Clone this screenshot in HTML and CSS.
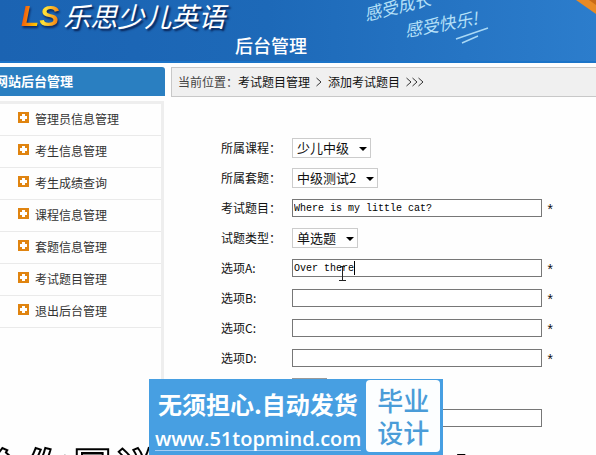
FILE: index.html
```html
<!DOCTYPE html>
<html lang="zh-CN">
<head>
  <meta charset="UTF-8">
  <meta name="viewport" content="width=device-width, initial-scale=1.0">
  <title>后台管理</title>
  <link rel="stylesheet" href="styles.css">
</head>
<body>
  <header class="header">
    <div class="brand"><span class="logo">LS</span><span class="brand-name">乐思少儿英语</span></div>
    <h1>后台管理</h1>
    <svg class="slogan" width="236" height="62" viewBox="0 0 236 62">
      <g class="slogan-text">
        <text x="6" y="21" transform="rotate(-14 6 21)">感受成长</text>
        <text x="46" y="37" transform="rotate(-10 46 37)">感受快乐!</text>
      </g>
      <path d="M96 39 L128 28 M102 43 L118 36" fill="none" stroke="#a9d8f5" stroke-width="1.4"/>
      <path d="M216 0 L236 14 V0 Z" fill="#e98a24"/>
      <path d="M229 0 L236 5 V0 Z" fill="#c96a17"/>
    </svg>
  </header>

  <div class="layout">
    <aside class="sidebar">
      <h2>网站后台管理</h2>
      <nav class="menu">
        <a href="#"><i class="plus"></i>管理员信息管理</a>
        <a href="#"><i class="plus"></i>考生信息管理</a>
        <a href="#"><i class="plus"></i>考生成绩查询</a>
        <a href="#"><i class="plus"></i>课程信息管理</a>
        <a href="#"><i class="plus"></i>套题信息管理</a>
        <a href="#"><i class="plus"></i>考试题目管理</a>
        <a href="#"><i class="plus"></i>退出后台管理</a>
      </nav>
    </aside>

    <main class="main">
      <div class="crumbs">
        <span class="muted">当前位置：</span><span>考试题目管理</span>
        <svg class="arrow" width="6" height="10" viewBox="0 0 6 10"><path d="M0.5 1 L5 5 L0.5 9"/></svg>
        <span>添加考试题目</span>
        <svg class="arrow" width="18" height="10" viewBox="0 0 18 10"><path d="M0.5 1 L5 5 L0.5 9 M6.5 1 L11 5 L6.5 9 M12.5 1 L17 5 L12.5 9"/></svg>
      </div>

      <form class="form">
        <div class="row">
          <label for="course">所属课程：</label>
          <span class="select"><select id="course"><option>少儿中级</option></select></span>
        </div>
        <div class="row">
          <label for="paper">所属套题：</label>
          <span class="select"><select id="paper"><option>中级测试2</option></select></span>
        </div>
        <div class="row">
          <label for="title">考试题目：</label>
          <span class="field"><input type="text" id="title" value="Where is my little cat?"></span>
          <span class="star">*</span>
        </div>
        <div class="row">
          <label for="type">试题类型：</label>
          <span class="select"><select id="type"><option>单选题</option></select></span>
        </div>
        <div class="row">
          <label for="optA">选项A:</label>
          <span class="field">
            <input type="text" id="optA" value="Over there">
            <svg class="pointer" width="18" height="22" viewBox="0 0 18 22">
              <path d="M14.5 2 V16" stroke="#000"/>
              <path d="M2.5 8 V21 M-1 21.5 H6 M0 7.5 H5" stroke="#222"/>
            </svg>
          </span>
          <span class="star">*</span>
        </div>
        <div class="row">
          <label for="optB">选项B:</label>
          <span class="field"><input type="text" id="optB"></span>
          <span class="star">*</span>
        </div>
        <div class="row">
          <label for="optC">选项C:</label>
          <span class="field"><input type="text" id="optC"></span>
          <span class="star">*</span>
        </div>
        <div class="row">
          <label for="optD">选项D:</label>
          <span class="field"><input type="text" id="optD"></span>
          <span class="star">*</span>
        </div>
        <div class="row">
          <span class="select answer"><select id="answer" aria-label="答案"><option></option></select></span>
        </div>
        <div class="row">
          <span class="field score"><input type="text" id="score" aria-label="分值"></span>
        </div>
      </form>
    </main>
  </div>

  <div class="caption"><span>个你是说</span><span class="caption-end">l</span><span>C</span></div>

  <div class="banner">
    <div class="banner-text">
      <strong>无须担心.自动发货</strong>
      <a href="#">www.51topmind.com</a>
    </div>
    <div class="banner-card">毕业<br>设计</div>
  </div>
</body>
</html>
```

FILE: styles.css
```css
:root {
  --blue: #2a7fc1;
  --line: #c8c8c8;
  --sans: "Liberation Sans", "Noto Sans CJK SC", sans-serif;
}
* { box-sizing: border-box; margin: 0; padding: 0; }
body {
  min-height: 100vh;
  display: flex; flex-direction: column;
  overflow: hidden;
  background: #fefefe;
  color: #111;
  font: 12px/18px "Noto Sans CJK SC", sans-serif;
}

/* header */
.header {
  position: relative;
  height: 63px;
  flex: none;
  padding-left: 21px;
  background: linear-gradient(90deg, #1b63b2 0%, #1d69b8 45%, #2c7dcc 100%);
  border-bottom: 2px solid #1b74c8;
  color: #fff;
}
.brand { display: flex; align-items: center; gap: 4px; height: 32px; }
.logo {
  font: italic bold 30px/32px "Liberation Sans", sans-serif;
  background: linear-gradient(100deg, #f04a10 5%, #ffc800 45%, #ffe23a 60%, #f47a10 95%);
  -webkit-background-clip: text;
  background-clip: text;
  color: transparent;
  filter: drop-shadow(1px 2px 1px rgba(0,0,40,0.6));
}
.brand-name {
  font-size: 27px; line-height: 30px; font-style: italic;
  text-shadow: 2px 2px 2px rgba(0,10,50,0.8);
}
.header h1 {
  padding-left: 214px;
  font-size: 18px; line-height: 26px; font-weight: 500;
}
.slogan { position: absolute; right: 0; top: 0; }
.slogan-text { fill: #b5e0f8; font-size: 17px; font-style: italic; }

/* columns */
.layout { display: flex; flex: 1; gap: 6px; padding-top: 4px; }
.sidebar { flex: none; width: 165px; display: flex; flex-direction: column; }
.sidebar h2 {
  height: 29px;
  margin-bottom: 5px;
  background: var(--blue);
  border-radius: 0 3px 0 0;
  color: #fff;
  font-size: 13px; line-height: 28px; font-weight: bold;
  text-indent: -5px;
}
.menu {
  flex: 1;
  margin-right: 1px;
  border-top: 3px solid #eee;
  border-right: 3px solid #eee;
}
.menu a {
  display: flex; align-items: center; gap: 6px;
  height: 32px;
  padding: 0 0 1px 18px;
  border-bottom: 1px solid #eaeaea;
  color: #333;
  text-decoration: none;
}
.plus {
  width: 11px; height: 11px;
  margin-bottom: 3px;
  background:
    linear-gradient(#fff, #fff) center / 7px 3px no-repeat,
    linear-gradient(#fff, #fff) center / 3px 7px no-repeat,
    #e08410;
}

.main { flex: 1; min-width: 0; }
.crumbs {
  display: flex; align-items: center;
  height: 30px;
  padding-left: 6px;
  background: #f0f0f0;
  border: 1px solid var(--line);
  border-right: 0;
}
.crumbs .muted { color: #444; }
.arrow { margin: 0 6px; fill: none; stroke: #333; }

/* form */
.form { padding: 36px 0 0 50px; }
.row { display: flex; align-items: center; height: 30px; }
.row label { flex: none; width: 71px; }
.select { position: relative; display: block; }
.select::after {
  content: "";
  position: absolute; right: 4px; top: 9px;
  border: 4px solid transparent;
  border-top-color: #000;
  border-bottom: 0;
  pointer-events: none;
}
.select select {
  display: block;
  appearance: none;
  height: 20px;
  padding: 0 20px 0 4px;
  background: #fff;
  border: 1px solid #ccc;
  border-radius: 0;
  color: #111;
  font: 13px/18px "Noto Sans CJK SC", sans-serif;
}
.answer, .score { margin-left: 71px; }
.answer select { width: 35px; border-color: #999; }
.field { position: relative; width: 250px; }
.field input {
  display: block;
  width: 100%; height: 18px;
  padding: 0 1px;
  background: #fff;
  border: 1px solid #777;
  color: #000;
  font: 10px/16px "Liberation Mono", monospace;
}
.pointer { position: absolute; left: 48px; top: 0; overflow: visible; }
.star { padding: 5px 0 0 4px; font: 14px/14px "Liberation Mono", monospace; }

/* subtitle running off the bottom edge */
.caption {
  position: fixed; left: -20px; right: -14px; bottom: -36px;
  display: flex;
  height: 42px;
  color: #fff;
  font: bold 45px/46px var(--sans);
  -webkit-text-stroke: 2px #000;
}
.caption-end { margin: 0 110px 0 auto; }

/* promo banner over the page */
.banner {
  position: fixed; left: 149px; bottom: 0;
  display: flex; gap: 5px;
  height: 76px;
  padding: 1px 3px 3px 6px;
  background: #479fe2;
  color: #fff;
}
.banner-text { display: flex; flex-direction: column; }
.banner-text strong { padding-left: 3px; font-size: 24px; line-height: 48px; font-weight: bold; }
.banner-text a {
  color: #fff;
  font: 600 20px/22px "Open Sans", sans-serif;
  text-decoration: none;
  border-bottom: 1px solid #a5cdf3;
}
.banner-card {
  width: 74px;
  padding-top: 4px;
  background: #fcfeff;
  border-radius: 4px;
  color: #4a9cd8;
  font-size: 26px; line-height: 32px; font-weight: 500;
  text-align: center;
}
```
